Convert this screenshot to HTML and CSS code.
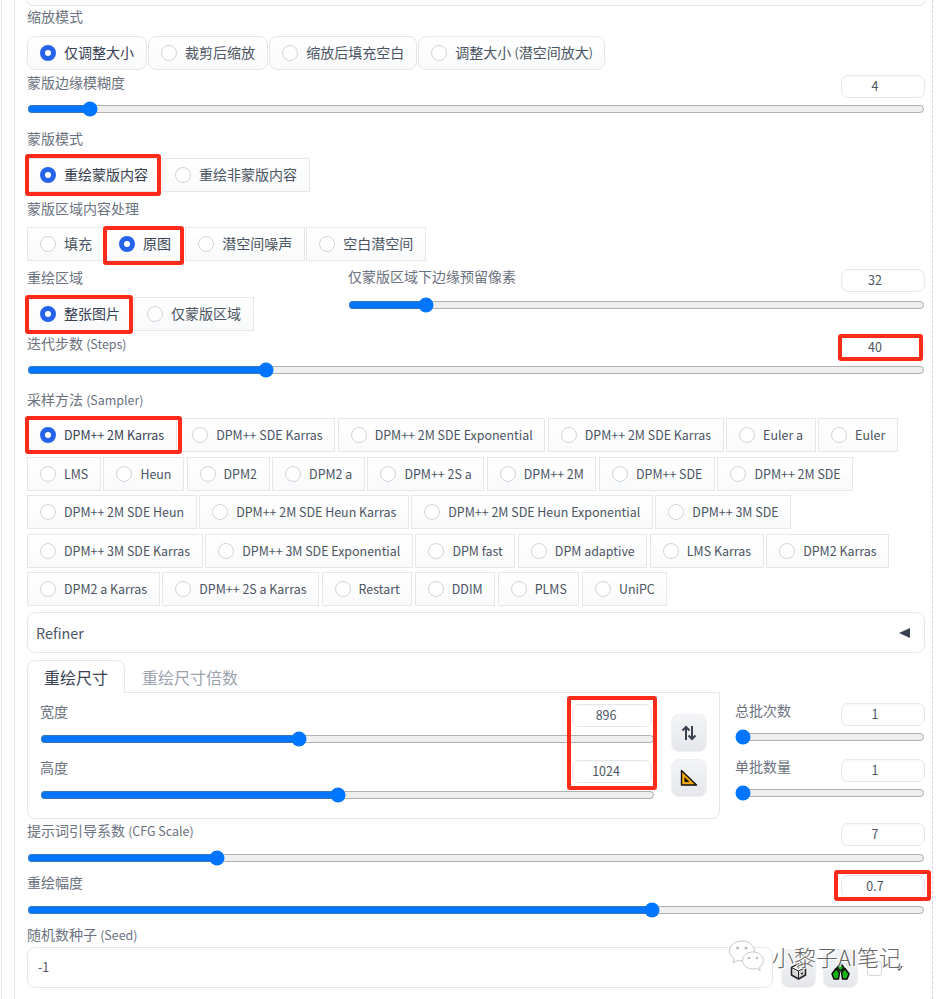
FILE: index.html
```html
<!DOCTYPE html>
<html lang="zh">
<head>
<meta charset="utf-8">
<title>重绘设置</title>
<link rel="stylesheet" href="styles.css">
</head>
<body>
<div class="page">
  <div class="outer">
    <main class="inner">
      <div class="top-box"></div>

      <div class="label mt-1">缩放模式</div>
      <div class="radios rounded mt-9">
        <label class="radio on"><i></i>仅调整大小</label>
        <label class="radio"><i></i>裁剪后缩放</label>
        <label class="radio"><i></i>缩放后填充空白</label>
        <label class="radio"><i></i>调整大小&nbsp;<span class="lat">(</span>潜空间放大<span class="lat">)</span></label>
      </div>

      <div class="field mt-5">
        <div class="head"><span class="label">蒙版边缘模糊度</span><span class="num">4</span></div>
        <input class="range" type="range" min="0" max="64" value="4">
      </div>

      <div class="label mt-12">蒙版模式</div>
      <div class="radios mt-9">
        <label class="radio on"><i></i>重绘蒙版内容</label>
        <label class="radio"><i></i>重绘非蒙版内容</label>
      </div>

      <div class="label mt-7">蒙版区域内容处理</div>
      <div class="radios mt-8">
        <label class="radio"><i></i>填充</label>
        <label class="radio on"><i></i>原图</label>
        <label class="radio"><i></i>潜空间噪声</label>
        <label class="radio"><i></i>空白潜空间</label>
      </div>

      <div class="two-col mt-7">
        <div>
          <div class="label">重绘区域</div>
          <div class="radios mt-9">
            <label class="radio on"><i></i>整张图片</label>
            <label class="radio"><i></i>仅蒙版区域</label>
          </div>
        </div>
        <div class="field pad-1">
          <div class="head tall-2"><span class="label">仅蒙版区域下边缘预留像素</span><span class="num">32</span></div>
          <input class="range" type="range" min="0" max="256" value="32">
        </div>
      </div>

      <div class="field mt-5">
        <div class="head"><span class="label">迭代步数 <span class="lat">(Steps)</span></span><span class="num">40</span></div>
        <input class="range" type="range" min="1" max="150" value="40">
      </div>

      <div class="label mt-12">采样方法 <span class="lat">(Sampler)</span></div>
      <div class="radios wrap mt-7">
        <label class="radio on"><i></i>DPM++ 2M Karras</label>
        <label class="radio"><i></i>DPM++ SDE Karras</label>
        <label class="radio"><i></i>DPM++ 2M SDE Exponential</label>
        <label class="radio"><i></i>DPM++ 2M SDE Karras</label>
        <label class="radio"><i></i>Euler a</label>
        <label class="radio"><i></i>Euler</label>
        <label class="radio"><i></i>LMS</label>
        <label class="radio"><i></i>Heun</label>
        <label class="radio"><i></i>DPM2</label>
        <label class="radio"><i></i>DPM2 a</label>
        <label class="radio"><i></i>DPM++ 2S a</label>
        <label class="radio"><i></i>DPM++ 2M</label>
        <label class="radio"><i></i>DPM++ SDE</label>
        <label class="radio"><i></i>DPM++ 2M SDE</label>
        <label class="radio"><i></i>DPM++ 2M SDE Heun</label>
        <label class="radio"><i></i>DPM++ 2M SDE Heun Karras</label>
        <label class="radio"><i></i>DPM++ 2M SDE Heun Exponential</label>
        <label class="radio"><i></i>DPM++ 3M SDE</label>
        <label class="radio"><i></i>DPM++ 3M SDE Karras</label>
        <label class="radio"><i></i>DPM++ 3M SDE Exponential</label>
        <label class="radio"><i></i>DPM fast</label>
        <label class="radio"><i></i>DPM adaptive</label>
        <label class="radio"><i></i>LMS Karras</label>
        <label class="radio"><i></i>DPM2 Karras</label>
        <label class="radio"><i></i>DPM2 a Karras</label>
        <label class="radio"><i></i>DPM++ 2S a Karras</label>
        <label class="radio"><i></i>Restart</label>
        <label class="radio"><i></i>DDIM</label>
        <label class="radio"><i></i>PLMS</label>
        <label class="radio"><i></i>UniPC</label>
      </div>

      <div class="accordion mt-6"><span>Refiner</span><b class="arrow-left"></b></div>

      <div class="size-row mt-7">
        <div class="size-left">
          <div class="tabs">
            <span class="tab active">重绘尺寸</span>
            <span class="tab">重绘尺寸倍数</span>
          </div>
          <div class="tab-panel">
            <div class="dims">
              <div class="field">
                <div class="head mid"><span class="label">宽度</span><span class="num narrow">896</span></div>
                <input class="range" type="range" min="64" max="2048" step="8" value="896">
              </div>
              <div class="field">
                <div class="head mid"><span class="label">高度</span><span class="num narrow">1024</span></div>
                <input class="range" type="range" min="64" max="2048" step="8" value="1024">
              </div>
            </div>
            <div class="dim-tools">
              <button class="tool" type="button" aria-label="交换宽高">
                <svg width="16" height="16" viewBox="0 0 16 16"><path d="M5 15V2M1.500 5.500 5 2l3.500 3.500M11 1v13M7.500 10.500 11 14l3.500-3.500" fill="none" stroke="#374151" stroke-width="2"/></svg>
              </button>
              <button class="tool" type="button" aria-label="按比例">
                <svg width="18" height="18" viewBox="0 0 18 18"><path d="M1.500 1.500 16.500 16H1.500Z" fill="#f5a80c" stroke="#111" stroke-width="1.400" stroke-linejoin="round"/><path d="M4.500 8 9.500 13H4.500Z" fill="#111"/></svg>
              </button>
            </div>
          </div>
        </div>
        <div class="size-right">
          <div class="field">
            <div class="head"><span class="label">总批次数</span><span class="num">1</span></div>
            <input class="range" type="range" min="1" max="100" value="1">
          </div>
          <div class="field">
            <div class="head"><span class="label">单批数量</span><span class="num">1</span></div>
            <input class="range" type="range" min="1" max="8" value="1">
          </div>
        </div>
      </div>

      <div class="field mt-4">
        <div class="head mid"><span class="label">提示词引导系数 <span class="lat">(CFG Scale)</span></span><span class="num">7</span></div>
        <input class="range" type="range" min="1" max="30" value="7">
      </div>

      <div class="field mt-9">
        <div class="head mid"><span class="label">重绘幅度</span><span class="num">0.7</span></div>
        <input class="range" type="range" min="0" max="1" step="0.01" value="0.7">
      </div>

      <div class="label mt-7">随机数种子 <span class="lat">(Seed)</span></div>
      <div class="seed-row">
        <div class="seed-input">-1</div>
        <button class="tool seed-tool" type="button" aria-label="随机">
          <svg class="seed-icon" width="17" height="17" viewBox="0 0 17 17"><path d="M8.500 1 15.500 4.500V12L8.500 16 1.500 12V4.500Z" fill="#d9d9d9" stroke="#222" stroke-width="1.500" stroke-linejoin="round"/><path d="M1.500 4.500 8.500 8 15.500 4.500 8.500 1Z" fill="#fff" stroke="#222" stroke-width="1"/><path d="M8.500 8V16" stroke="#222" stroke-width="1"/><circle cx="8.500" cy="4.500" r="1.100" fill="#222"/><circle cx="12" cy="10.500" r="1.100" fill="#222"/></svg>
        </button>
        <button class="tool seed-tool" type="button" aria-label="回收">
          <svg class="seed-icon" width="19" height="18" viewBox="0 0 19 18"><path d="M9.500 1 13 6 9.500 9 6 6Z" fill="#17b317" stroke="#0b0b0b" stroke-width="1.500" stroke-linejoin="round"/><path d="M5 6.500 8.500 10.500 7.500 17H3L1 12Z" fill="#17b317" stroke="#0b0b0b" stroke-width="1.500" stroke-linejoin="round"/><path d="M14 6.500 18 12 16 17H11.500L10.500 10.500Z" fill="#17b317" stroke="#0b0b0b" stroke-width="1.500" stroke-linejoin="round"/></svg>
        </button>
        <span class="check"></span>
        <b class="arrow-down"></b>
      </div>
    </main>
  </div>

  <div class="mark m1"></div>
  <div class="mark m2"></div>
  <div class="mark m3"></div>
  <div class="mark m4"></div>
  <div class="mark m5"></div>
  <div class="mark m6"></div>
  <div class="mark m7"></div>

  <div class="watermark">
    <svg width="38" height="34" viewBox="0 0 38 34"><path d="M14 1C7 1 1.500 5.500 1.500 11c0 3.200 1.800 6 4.600 7.800L5 23l4.500-2.600c1.400.4 3 .6 4.500.6 7 0 12.500-4.500 12.500-10S21 1 14 1Z" fill="#fff" stroke="#c9c9c9"/><path d="M25 12c-6 0-10.500 4-10.500 8.500S19 29 25 29c1.200 0 2.400-.2 3.500-.5l3.800 2.200-1-3.400c2.500-1.600 4-4 4-6.800C35.300 16 31 12 25 12Z" fill="#fff" stroke="#c9c9c9"/><circle cx="9.500" cy="8" r="1.500" fill="#bbb"/><circle cx="18" cy="8" r="1.500" fill="#bbb"/><circle cx="21" cy="18" r="1.300" fill="#bbb"/><circle cx="29" cy="18" r="1.300" fill="#bbb"/></svg>
    <span>小黎子AI笔记</span>
  </div>
</div>
</body>
</html>
```

FILE: styles.css
```css
* { box-sizing: border-box; }
html, body { margin: 0; padding: 0; background: #fff; }
body {
  font-family: "Noto Sans CJK SC", "Noto Sans", sans-serif;
  font-size: 14px;
  color: #4b5563;
}
.page { position: relative; width: 937px; height: 999px; overflow: hidden; padding-left: 1px; }
.outer { border-left: 1px solid #e5e7eb; padding-left: 12px; height: 100%; }
.inner {
  width: 919px;
  height: 100%;
  border-left: 1px solid #e5e7eb;
  border-right: 1px dashed #d1d5db;
  padding: 0 7px 0 12px;
}

.mt-1 { margin-top: 1px; }
.mt-4 { margin-top: 4px; }
.mt-5 { margin-top: 5px; }
.mt-6 { margin-top: 6px; }
.mt-7 { margin-top: 7px; }
.mt-8 { margin-top: 8px; }
.mt-9 { margin-top: 9px; }
.mt-12 { margin-top: 12px; }
.pad-1 { padding-top: 1px; }

.top-box {
  height: 6px;
  border: 1px solid #e5e7eb;
  border-top: 0;
  border-radius: 0 0 8px 8px;
}
.label {
  display: block;
  font-size: 14px;
  line-height: 18px;
  padding-bottom: 2px;
  color: #6b7280;
  white-space: nowrap;
}
.lat { font-size: 12.450px; }

.radios { display: flex; gap: 1.500px; }
.radios.wrap { flex-wrap: wrap; gap: 4.600px 2.500px; }
.radio {
  display: flex;
  align-items: center;
  height: 34px;
  padding: 0 11.600px 2px 12px;
  font-size: 14px;
  line-height: 20px;
  color: #4b5563;
  white-space: nowrap;
  border: 1px solid #e5e7eb;
  background: linear-gradient(to bottom, #fff, #f9fafb);
}
.radios.wrap .radio { font-size: 12.450px; padding-bottom: 0; }
.rounded .radio { border-radius: 8px; }
.radio i {
  flex: none;
  width: 16px;
  height: 16px;
  margin: 2px 8px 0 0;
  border: 1px solid #d1d5db;
  border-radius: 50%;
  background: #fff;
}
.radios.wrap .radio i { margin-top: 0; }
.radio.on { color: #374151; }
.radio.on i {
  border: 5px solid #2563eb;
  background: #fff;
}

.field { display: block; }
.head { display: flex; justify-content: space-between; align-items: flex-start; height: 26px; }
.head.tall-2 { height: 28px; }
.head.mid { height: 27px; }
.head .label { margin-top: -2px; }
.num {
  width: 84px;
  height: 23px;
  padding-right: 16px;
  border: 1px solid #e5e7eb;
  border-radius: 7px;
  background: #fff;
  font-size: 12.450px;
  line-height: 21px;
  text-align: center;
  color: #4b5563;
  box-shadow: inset 0 1px 2px rgba(0, 0, 0, .03);
}
.num.narrow { width: 80px; margin-right: 3px; padding-right: 12px; }
.range { display: block; width: 100%; height: 16px; margin: 0; }

.two-col { display: grid; grid-template-columns: 321px 1fr; }

.accordion {
  display: flex;
  justify-content: space-between;
  align-items: center;
  height: 41px;
  padding: 0 14px 0 8px;
  border: 1px solid #e5e7eb;
  border-radius: 8px;
  font-size: 14.400px;
  color: #4b5563;
}
.arrow-left { width: 0; height: 0; border: 5.500px solid transparent; border-left: 0; border-right: 11px solid #374151; }

.size-row { display: flex; gap: 15px; }
.size-left { width: 693px; flex: none; }
.size-right { flex: 1; padding-top: 43px; display: flex; flex-direction: column; gap: 14px; }
.tabs { display: flex; height: 32px; position: relative; z-index: 1; }
.tab { font-size: 16px; line-height: 34px; padding: 0 17px; color: #9ca3af; }
.tab.active {
  width: 98px;
  height: 33px;
  padding: 0 16px;
  color: #374151;
  background: #fff;
  border: 1px solid #e5e7eb;
  border-bottom: 0;
  border-radius: 8px 8px 0 0;
  line-height: 32px;
}
.tab-panel {
  display: flex;
  gap: 16px;
  height: 127px;
  padding: 11px 0 0 12px;
  border: 1px solid #e5e7eb;
  border-radius: 0 0 8px 8px;
}
.dims { width: 615px; flex: none; display: flex; flex-direction: column; gap: 13px; }
.dim-tools { display: flex; flex-direction: column; gap: 7px; padding-top: 10px; }
.tool {
  display: flex;
  align-items: center;
  justify-content: center;
  width: 36px;
  height: 38px;
  padding: 0;
  border: 1px solid #eef0f3;
  border-radius: 8px;
  background: linear-gradient(to bottom, #f3f4f6, #e5e7eb);
}

.seed-row { display: flex; align-items: flex-start; margin-top: 1px; position: relative; }
.seed-input {
  width: 746px;
  height: 41px;
  padding-left: 10px;
  border: 1px solid #e5e7eb;
  border-radius: 8px;
  font-size: 12.450px;
  line-height: 39px;
  color: #4b5563;
}
.seed-tool { margin: 2px 0 0 7px; height: 39px; width: 35px; }
.seed-tool:first-of-type { margin-left: 8px; }
.seed-icon { margin-top: 5px; }
.check {
  width: 15px;
  height: 15px;
  margin: 14px 0 0 9px;
  border: 1px solid #d1d5db;
  border-radius: 3px;
  background: #fff;
}
.arrow-down { width: 0; height: 0; margin: 19px 0 0 13px; border: 4px solid transparent; border-bottom: 0; border-top: 5px solid #374151; }

.mark { position: absolute; border: 4px solid #fe2a1a; border-radius: 3px; }
.m1 { left: 25px; top: 154px; width: 136px; height: 42px; }
.m2 { left: 103px; top: 226px; width: 81px; height: 39px; }
.m3 { left: 25px; top: 295px; width: 108px; height: 39px; }
.m4 { left: 838px; top: 334px; width: 85px; height: 27px; }
.m5 { left: 25px; top: 416px; width: 157px; height: 38px; }
.m6 { left: 567px; top: 696px; width: 90px; height: 94px; }
.m7 { left: 834px; top: 870px; width: 97px; height: 31px; }

.watermark { position: absolute; left: 728px; top: 938px; display: flex; align-items: flex-start; gap: 6px; pointer-events: none; }
.watermark svg { margin-top: 2px; }
.watermark span {
  font-size: 22px;
  line-height: 36px;
  color: #666;
  font-weight: 300;
  white-space: nowrap;
  text-shadow: 0 0 2px #fff, 0 0 2px #fff, 1px 1px 1px #fff, -1px -1px 1px #fff;
}
```
